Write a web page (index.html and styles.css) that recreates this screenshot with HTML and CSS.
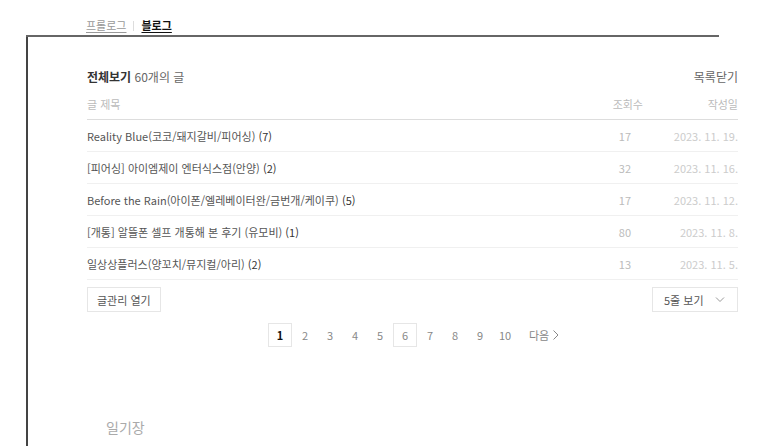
FILE: index.html
```html
<!DOCTYPE html>
<html lang="ko">
<head>
<meta charset="utf-8">
<link rel="stylesheet" href="styles.css">
</head>
<body>
<nav class="tabs">
  <a class="tab">프롤로그</a>
  <span class="sep"></span>
  <a class="tab active">블로그</a>
</nav>
<div class="topline"></div>
<main class="frame">
  <section class="list">
    <div class="list-head">
      <div class="title"><strong>전체보기</strong> 60개의 글</div>
      <a class="close">목록닫기</a>
    </div>
    <div class="row header">
      <span class="c-title">글 제목</span>
      <span class="c-views">조회수</span>
      <span class="c-date">작성일</span>
    </div>
    <div class="row">
      <span class="c-title">Reality Blue(코코/돼지갈비/피어싱) <b>(7)</b></span>
      <span class="c-views">17</span>
      <span class="c-date">2023. 11. 19.</span>
    </div>
    <div class="row">
      <span class="c-title">[피어싱] 아이엠제이 엔터식스점(안양) <b>(2)</b></span>
      <span class="c-views">32</span>
      <span class="c-date">2023. 11. 16.</span>
    </div>
    <div class="row">
      <span class="c-title">Before the Rain(아이폰/엘레베이터완/금번개/케이쿠) <b>(5)</b></span>
      <span class="c-views">17</span>
      <span class="c-date">2023. 11. 12.</span>
    </div>
    <div class="row">
      <span class="c-title">[개통] 알뜰폰 셀프 개통해 본 후기 (유모비) <b>(1)</b></span>
      <span class="c-views">80</span>
      <span class="c-date">2023. 11. 8.</span>
    </div>
    <div class="row">
      <span class="c-title">일상상플러스(양꼬치/뮤지컬/아리) <b>(2)</b></span>
      <span class="c-views">13</span>
      <span class="c-date">2023. 11. 5.</span>
    </div>
    <div class="controls">
      <button class="btn">글관리 열기</button>
      <button class="btn select">5줄 보기
        <svg width="10" height="6" viewBox="0 0 10 6"><path d="M1 0.5 L5 4.5 L9 0.5" fill="none" stroke="#999" stroke-width="1"/></svg>
      </button>
    </div>
    <div class="pager">
      <a class="pg current">1</a>
      <a class="pg">2</a>
      <a class="pg">3</a>
      <a class="pg">4</a>
      <a class="pg">5</a>
      <a class="pg boxed">6</a>
      <a class="pg">7</a>
      <a class="pg">8</a>
      <a class="pg">9</a>
      <a class="pg">10</a>
      <a class="pg next">다음 <svg width="6" height="10" viewBox="0 0 6 10"><path d="M0.5 0.5 L5 5 L0.5 9.5" fill="none" stroke="#888" stroke-width="1"/></svg></a>
    </div>
  </section>
  <h2 class="category">일기장</h2>
</main>
</body>
</html>
```

FILE: styles.css
```css
* { box-sizing: border-box; }
html, body { margin: 0; padding: 0; background: #fff; }
body {
  font-family: "Noto Sans CJK KR", "Noto Sans", sans-serif;
  font-size: 12px;
  color: #555;
  height: 446px;
  overflow: hidden;
}
.tabs {
  height: 35px;
  padding: 18px 0 0 86px;
  display: flex;
  align-items: flex-start;
  font-size: 11px;
  line-height: 14px;
}
.tab {
  color: #999;
  text-decoration: underline;
  text-underline-offset: 2px;
}
.tab.active {
  color: #111;
  font-weight: bold;
}
.sep {
  width: 1px;
  height: 10px;
  background: #ddd;
  margin: 3px 7px 0 7px;
}
.topline {
  margin-left: 26px;
  width: 693px;
  height: 2px;
  background: #666;
}
.frame {
  margin-left: 26px;
  border-left: 2px solid #444;
  height: 420px;
  padding-left: 59px;
}
.list { width: 651px; }
.list-head {
  display: flex;
  justify-content: space-between;
  align-items: flex-start;
  padding-top: 31px;
  height: 52px;
  font-size: 12px;
  line-height: 17px;
  color: #666;
}
.list-head strong { color: #333; font-weight: bold; }
.close { color: #666; }
.row {
  display: flex;
  align-items: center;
  height: 32px;
  border-bottom: 1px solid #f0f0f0;
  font-size: 11px;
}
.row.header {
  height: 31px;
  align-items: flex-start;
  padding-top: 7px;
  line-height: 16px;
  border-bottom: 1px solid #ddd;
  color: #bbb;
}
.c-title { flex: 1; }
.c-title b { font-weight: normal; color: #333; }
.c-views { width: 60px; text-align: right; padding-right: 12px; color: #bbb; }
.row.header .c-views { padding-right: 0; width: 60px; }
.c-date { width: 95px; text-align: right; color: #ccc; }
.row.header .c-date { color: #bbb; }
.controls {
  display: flex;
  justify-content: space-between;
  margin-top: 7px;
}
.btn {
  font-family: inherit;
  font-size: 11px;
  color: #555;
  background: #fff;
  border: 1px solid #e6e6e6;
  height: 25px;
  padding: 0 9px;
  display: flex;
  align-items: center;
  cursor: pointer;
}
.btn.select {
  width: 86px;
  justify-content: space-between;
  padding: 0 12px 0 11px;
}
.pager {
  display: flex;
  justify-content: flex-start;
  padding-left: 181px;
  margin-top: 10px;
  height: 25px;
  align-items: center;
}
.pg {
  width: 24px;
  height: 24px;
  margin-right: 1px;
  display: flex;
  align-items: center;
  justify-content: center;
  color: #888;
  font-size: 11px;
  border: 1px solid transparent;
}
.pg.current { border-color: #e6e6e6; color: #111; font-weight: bold; }
.pg.boxed { border-color: #e6e6e6; }
.pg.next { width: auto; padding-left: 1px; margin-left: 9px; gap: 4px; }
.category {
  margin: 70px 0 0 19px;
  font-size: 14px;
  font-weight: normal;
  color: #aaa;
}
```
